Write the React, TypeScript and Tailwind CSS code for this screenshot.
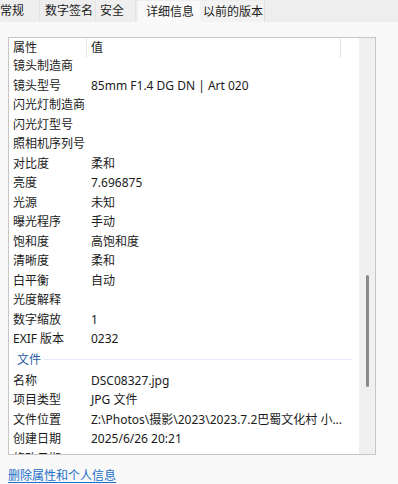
const TABS = [
  { label: '常规', w: 'w-[40px]', pl: 'pl-0' },
  { label: '数字签名', w: 'w-[56px]', pl: 'pl-[5px]' },
  { label: '安全', w: 'w-[40px]', pl: 'pl-[4px]' },
];

const CAMERA_ROWS = [
  ['镜头制造商', ''],
  ['镜头型号', '85mm F1.4 DG DN | Art 020'],
  ['闪光灯制造商', ''],
  ['闪光灯型号', ''],
  ['照相机序列号', ''],
  ['对比度', '柔和'],
  ['亮度', '7.696875'],
  ['光源', '未知'],
  ['曝光程序', '手动'],
  ['饱和度', '高饱和度'],
  ['清晰度', '柔和'],
  ['白平衡', '自动'],
  ['光度解释', ''],
  ['数字缩放', '1'],
  ['EXIF 版本', '0232'],
];

const FILE_ROWS = [
  ['名称', 'DSC08327.jpg'],
  ['项目类型', 'JPG 文件'],
  ['文件位置', 'Z:\\Photos\\摄影\\2023\\2023.7.2巴蜀文化村 小...'],
  ['创建日期', '2025/6/26 20:21'],
  ['修改日期', '2025/6/26 20:21'],
];

function Row({ name, value }: { name: string; value: string }) {
  return (
    <div className="flex h-[19.5px] leading-[19.5px] shrink-0">
      <div className="w-[82px] pl-[4px] whitespace-nowrap">{name}</div>
      <div className="flex-1 whitespace-nowrap">{value}</div>
    </div>
  );
}

export default function App() {
  return (
    <div
      className="w-[398px] h-[484px] bg-[#f9f9f9] text-[12px] leading-[18px] text-[#1b1b1b] overflow-hidden flex flex-col"
      style={{ fontFamily: '"Noto Sans", "Noto Sans CJK SC", sans-serif' }}
    >
      {/* tab strip */}
      <div className="h-[22px] bg-[#eeeeee] flex items-end shrink-0 leading-[22px]">
        {TABS.map((t) => (
          <div
            key={t.label}
            className={`${t.w} ${t.pl} h-[22px] border-r border-[#e2e2e2] whitespace-nowrap`}
          >
            {t.label}
          </div>
        ))}
        <div className="w-[62px] h-[21px] leading-[21px] bg-[#f9f9f9] pl-[8px] ml-[2px] whitespace-nowrap">
          详细信息
        </div>
        <div className="w-[65px] h-[21px] leading-[21px] bg-[#f2f2f2] border-r border-[#dedede] pl-[3px] whitespace-nowrap">
          以前的版本
        </div>
      </div>

      {/* property list */}
      <div className="ml-[8px] mt-[15px] w-[368px] h-[418px] border border-[#c6c6c6] bg-white flex shrink-0">
        <div className="flex-1 flex flex-col overflow-hidden">
          <div className="h-[20px] leading-[20px] flex shrink-0 bg-white relative z-10">
            <div className="w-[78px] pl-[4px] h-full border-r border-[#e5e5e5]">属性</div>
            <div className="w-[254px] pl-[4px] h-full border-r border-[#e5e5e5]">值</div>
          </div>
          <div className="flex flex-col -mt-[2px]">
            {CAMERA_ROWS.map(([n, v]) => (
              <Row key={n} name={n} value={v} />
            ))}
            <div className="h-[22px] leading-[20px] flex items-center shrink-0 pl-[8px] gap-[3px]">
              <span className="text-[#2c5ea8]">文件</span>
              <div className="flex-1 h-px bg-[#e4ebf8] mr-[7px]" />
            </div>
            {FILE_ROWS.map(([n, v]) => (
              <Row key={n} name={n} value={v} />
            ))}
          </div>
        </div>
        {/* scrollbar */}
        <div className="w-[16px] bg-[#f0f0f0] flex justify-center pt-[237px] shrink-0">
          <div className="w-[3px] h-[112px] rounded-full bg-[#8a8a8a]" />
        </div>
      </div>

      <div className="ml-[8px] mt-[12px] leading-[18px]">
        <span className="text-[#1a6fc7] underline underline-offset-2">删除属性和个人信息</span>
      </div>
    </div>
  );
}
